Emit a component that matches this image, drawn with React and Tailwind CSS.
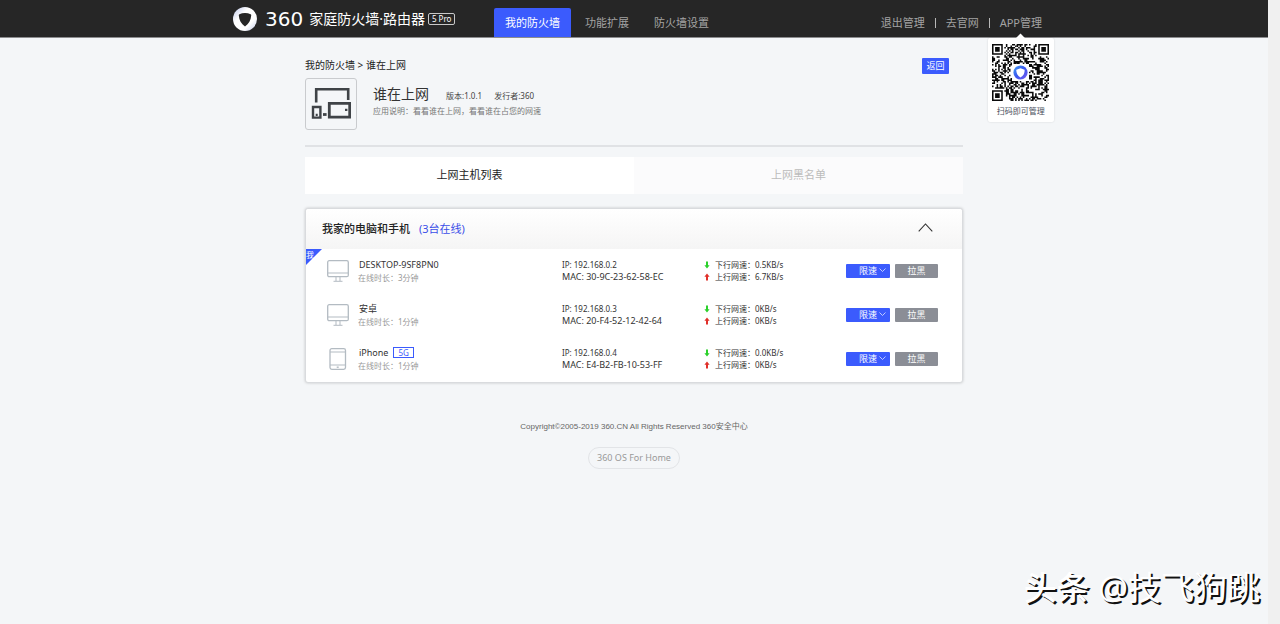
import { useState } from 'react'

const NAV = ['我的防火墙', '功能扩展', '防火墙设置']
const TABS = ['上网主机列表', '上网黑名单']

const DEVICES = [
  { id: 1, type: 'desktop', name: 'DESKTOP-9SF8PN0', online: '3分钟', ip: '192.168.0.2', mac: '30-9C-23-62-58-EC', down: '0.5KB/s', up: '6.7KB/s', self: true },
  { id: 2, type: 'desktop', name: '安卓', online: '1分钟', ip: '192.168.0.3', mac: '20-F4-52-12-42-64', down: '0KB/s', up: '0KB/s' },
  { id: 3, type: 'phone', name: 'iPhone', band: '5G', online: '1分钟', ip: '192.168.0.4', mac: 'E4-B2-FB-10-53-FF', down: '0.0KB/s', up: '0KB/s' },
]

const QR_SIZE = 37

// finder squares sit in three corners, the rest is filled from a small hash
function isDark(x, y) {
  const corners = [[0, 0], [QR_SIZE - 7, 0], [0, QR_SIZE - 7]]
  for (const [cx, cy] of corners) {
    const dx = x - cx
    const dy = y - cy
    if (dx >= -1 && dx <= 7 && dy >= -1 && dy <= 7) {
      const ring = Math.max(Math.abs(dx - 3), Math.abs(dy - 3))
      return ring === 3 || ring <= 1
    }
  }
  if (x > 12 && x < 24 && y > 12 && y < 24) return false
  let h = (x * 374761393 + y * 668265263) | 0
  h = Math.imul(h ^ (h >>> 13), 1274126177)
  return ((h ^ (h >>> 16)) & 255) < 134
}

function QrCode() {
  const cells = []
  for (let y = 0; y < QR_SIZE; y++) {
    for (let x = 0; x < QR_SIZE; x++) {
      if (isDark(x, y)) cells.push(`M${x} ${y}h1v1h-1z`)
    }
  }
  return (
    <svg viewBox="0 0 37 37" className="w-[57px] h-[57px]" role="img" aria-label="APP管理">
      <defs>
        <linearGradient id="qr-logo" x1="0" y1="0" x2="1" y2="1">
          <stop offset="0" stopColor="#3fa2f5" />
          <stop offset="0.5" stopColor="#3a55ee" />
          <stop offset="1" stopColor="#7a5cf0" />
        </linearGradient>
      </defs>
      <path d={cells.join('')} fill="#0a0a0a" />
      <circle cx="18.5" cy="18.5" r="4.6" fill="url(#qr-logo)" />
      <path d="M18.5 15.8l2.7 .9c.1 2.2-.7 3.8-2.7 5-2-1.2-2.8-2.8-2.7-5z" fill="#fff" />
    </svg>
  )
}

function ShieldLogo() {
  return (
    <svg viewBox="0 0 24 24" className="w-6 h-6" aria-hidden="true">
      <defs>
        <linearGradient id="shield" x1="0" y1="0" x2="1" y2="1">
          <stop offset="0" stopColor="#b9c4ea" />
          <stop offset="0.35" stopColor="#ffffff" />
          <stop offset="0.7" stopColor="#ffffff" />
          <stop offset="1" stopColor="#bcc5e6" />
        </linearGradient>
      </defs>
      <circle cx="12" cy="12" r="12" fill="url(#shield)" />
      <path d="M12 6c2 .1 4 .5 5.600 1.200.6.300.7.600.6 1.200-.3 4.600-2.300 8.200-6.200 11-3.900-2.800-5.900-6.400-6.200-11 0-.6.100-.9.600-1.200C8 6.500 10 6.100 12 6z" fill="#262626" />
    </svg>
  )
}

function DevicesIcon() {
  return (
    <svg viewBox="0 0 40 34" className="w-10 h-[34px]" fill="none" stroke="#3f4347" aria-hidden="true">
      <path d="M5.200 15.500V2.300h32V13" strokeWidth="2.600" />
      <path d="M18.300 16.300h20.400v13.900H18.300z" strokeWidth="2.800" />
      <path d="M2 20h7.400v10.600H2z" strokeWidth="2.400" />
      <path d="M12 27.500h3.600" strokeWidth="2.800" />
      <path d="M34 22.800h2.400M4.700 27.800h2" strokeWidth="2.200" />
    </svg>
  )
}

function DeviceIcon({ type }) {
  if (type === 'phone') {
    return (
      <svg viewBox="0 0 22 22" className="w-[22px] h-[22px]" fill="none" stroke="#b3bbc2" aria-hidden="true">
        <rect x="3" y="0.700" width="15.500" height="20.600" rx="1.800" strokeWidth="1.300" />
        <path d="M3 4h15.500M3 17h15.500" />
        <path d="M9.700 19.200h2" strokeWidth="1.400" />
      </svg>
    )
  }
  return (
    <svg viewBox="0 0 22 22" className="w-[22px] h-[22px]" fill="none" stroke="#b3bbc2" aria-hidden="true">
      <rect x="0.700" y="0.700" width="20.600" height="16" rx="1.500" strokeWidth="1.300" />
      <path d="M1 13h20M9 17v4M13 17v4M6.500 21.300h9" />
    </svg>
  )
}

function SpeedArrow({ up }) {
  return (
    <svg viewBox="0 0 6 8" className="w-[6px] h-2" aria-hidden="true">
      {up ? (
        <path d="M3 .5L5.600 3.800H4v3.700H2V3.800H.4z" fill="#e0302a" />
      ) : (
        <path d="M3 7.500L.4 4.200H2V.5h2v3.700h1.600z" fill="#2bd02b" />
      )}
    </svg>
  )
}

function Header({ nav, onNav }) {
  return (
    <header className="bg-[#262626] border-b border-[#8c8c8e]">
      <div className="mx-auto max-w-[822px] h-[37px] pl-[10px] pr-[3px] flex items-center">
        <a href="#home" className="w-[261px] flex items-center text-white">
          <ShieldLogo />
          <span className="ml-2 font-['DejaVu_Sans',sans-serif] text-[20px] leading-6">360</span>
          <span className="ml-[6px] text-[14px] leading-6 whitespace-nowrap">家庭防火墙·路由器</span>
          <span className="ml-[3px] px-[3px] border border-[#c8c8c8] rounded-[2px] text-[8px] leading-[10px] whitespace-nowrap">5 Pro</span>
        </a>
        <nav className="flex self-end gap-[3px]">
          {NAV.map((item) => (
            <a
              key={item}
              href="#nav"
              onClick={() => onNav(item)}
              className={`h-[29px] px-[11px] rounded-t-[2px] text-[11px] leading-[29px] ${
                nav === item ? 'bg-[#3b5bfd] text-white' : 'text-[#a3a3a3]'
              }`}
            >
              {item}
            </a>
          ))}
        </nav>
        <div className="ml-auto mt-2 flex items-center gap-[10px] text-[11px] leading-[29px] text-[#a3a3a3]">
          <a href="#logout">退出管理</a>
          <span className="w-px h-[10px] bg-[#b8b8b8]" />
          <a href="#site">去官网</a>
          <span className="w-px h-[10px] bg-[#b8b8b8]" />
          <div className="relative">
            <a href="#app">APP管理</a>
            <div className="absolute top-[30px] left-1/2 -translate-x-1/2 w-[66px] h-[84px] pt-[6px] flex flex-col items-center bg-white rounded-[2px] shadow-[0_0_2px_rgba(0,0,0,0.15)]">
              <span className="absolute -top-[3px] w-[7px] h-[7px] rotate-45 bg-white" />
              <QrCode />
              <span className="text-[8px] leading-5 text-[#4a4f5c] whitespace-nowrap">扫码即可管理</span>
            </div>
          </div>
        </div>
      </div>
    </header>
  )
}

function DeviceRow({ device }) {
  return (
    <tr className="h-11">
      <td className="relative p-0 pl-[21px]">
        {device.self && (
          <span className="absolute top-0 left-0 w-4 h-4 bg-[#3b5bfd] text-white text-[8px] leading-3 [clip-path:polygon(0_0,100%_0,0_100%)]">
            我
          </span>
        )}
        <div className="flex items-center gap-[9px]">
          <DeviceIcon type={device.type} />
          <div>
            <div className="flex items-center gap-[5px] pl-px text-[9px] leading-[13px] text-[#333]">
              {device.name}
              {device.band && (
                <span className="px-1 border border-[#3b5bfd] text-[8px] leading-[9px] text-[#3b5bfd]">{device.band}</span>
              )}
            </div>
            <div className="text-[8px] leading-[13px] text-[#999]">在线时长：{device.online}</div>
          </div>
        </div>
      </td>
      <td className="p-0">
        <div>IP: {device.ip}</div>
        <div className="text-[9px] leading-3">MAC: {device.mac}</div>
      </td>
      <td className="p-0">
        <div className="flex items-center gap-[5px]">
          <SpeedArrow />
          下行网速：{device.down}
        </div>
        <div className="flex items-center gap-[5px]">
          <SpeedArrow up />
          上行网速：{device.up}
        </div>
      </td>
      <td className="p-0">
        <div className="flex items-center gap-[5px] text-white">
          <div className="relative w-11">
            <select
              aria-label={`${device.name} 限速`}
              className="block appearance-none w-full h-[14px] pl-[13px] rounded-[1px] bg-[#3b5bfd] text-[9px] leading-[14px]"
            >
              <option>限速</option>
            </select>
            <svg viewBox="0 0 7 4" className="absolute right-1 top-1 w-[7px] h-1 pointer-events-none" fill="none" stroke="#dfe4ff" strokeWidth="0.800" aria-hidden="true">
              <path d="M.5 .5l3 3 3-3" />
            </svg>
          </div>
          <button type="button" className="w-[43px] h-[14px] rounded-[1px] bg-[#8b8e96] text-[9px] leading-[14px]">
            拉黑
          </button>
        </div>
      </td>
    </tr>
  )
}

export default function App() {
  const [nav, setNav] = useState(NAV[0])
  const [tab, setTab] = useState(TABS[0])
  const [open, setOpen] = useState(true)

  return (
    <div className="relative flex min-h-screen bg-[#f4f6f8] font-['Noto_Sans','Noto_Sans_CJK_SC',sans-serif]">
      <div className="flex-1">
        <Header nav={nav} onNav={setNav} />

        <main className="mx-auto max-w-[658px] pt-5">
          <div className="flex items-start justify-between">
            <div className="text-[10px] leading-[14px] text-[#222]">
              <a href="#firewall">我的防火墙</a> &gt; <span>谁在上网</span>
            </div>
            <button type="button" className="mr-[14px] w-[27px] h-4 rounded-[1px] bg-[#3b5bfd] text-[9px] leading-4 text-white">
              返回
            </button>
          </div>

          <div className="mt-1 flex gap-4">
            <div className="flex items-center justify-center w-[52px] h-[52px] border border-[#c9cbce] rounded-[3px]">
              <DevicesIcon />
            </div>
            <div className="pt-[5px]">
              <div className="flex items-baseline text-[8px] text-[#444]">
                <h1 className="mr-[17px] text-[14px] leading-[22px] text-[#333]">谁在上网</h1>
                <span className="mr-3">版本:1.0.1</span>
                <span>发行者:360</span>
              </div>
              <p className="text-[8px] leading-3 text-[#777]">应用说明：看看谁在上网，看看谁在占您的网速</p>
            </div>
          </div>

          <div className="mt-[15px] border-t-2 border-[#e0e2e5]" />

          <div className="mt-[10px] flex">
            {TABS.map((t) => (
              <button
                key={t}
                type="button"
                onClick={() => setTab(t)}
                className={`flex-1 h-[37px] text-[11px] ${
                  tab === t ? 'bg-white text-[#222]' : 'bg-[#fbfbfc] text-[#bbb]'
                }`}
              >
                {t}
              </button>
            ))}
          </div>

          <section className="mt-[14px] pb-px bg-white border border-[#d9dbde] rounded-[3px] shadow-[0_0_3px_rgba(0,0,0,0.2)]">
            <div className="flex items-center h-10 pl-4 pr-[29px] rounded-t-[3px] bg-linear-to-b from-white to-[#f5f5f5] text-[11px]">
              <h2 className="font-medium text-[#222]">我家的电脑和手机</h2>
              <span className="ml-[9px] text-[#3b4fe8]">(3台在线)</span>
              <button type="button" aria-label="折叠" onClick={() => setOpen(!open)} className="ml-auto pb-1">
                <svg viewBox="0 0 15 9" className="block w-[15px] h-[9px]" fill="none" stroke="#333" strokeWidth="1.100" aria-hidden="true">
                  <path d="M.7 8.300L7.500 1l6.800 7.300" />
                </svg>
              </button>
            </div>
            {open && (
              <table className="w-full table-fixed text-[8px] leading-3 text-[#333]">
                <colgroup>
                  <col />
                  <col className="w-[142px]" />
                  <col className="w-[142px]" />
                  <col className="w-[116px]" />
                </colgroup>
                <tbody>
                  {DEVICES.map((d) => (
                    <DeviceRow key={d.id} device={d} />
                  ))}
                </tbody>
              </table>
            )}
          </section>

          <footer className="pt-9 flex flex-col items-center">
            <p className="font-['Liberation_Sans','Noto_Sans_CJK_SC',sans-serif] text-[8px] leading-4 text-[#666]">
              Copyright©2005-2019 360.CN All Rights Reserved 360安全中心
            </p>
            <a href="#os" className="mt-3 px-2 h-[22px] border border-[#e2e4e7] rounded-full text-[9px] leading-5 text-[#999]">
              360 OS For Home
            </a>
          </footer>
        </main>
      </div>

      <div className="w-3 bg-[#f0f0f0]" />

      <p className="absolute right-[20px] bottom-3 text-[33px] leading-[48px] text-white [text-shadow:2px_2px_0_#111]">
        <span className="font-medium">头条</span> @技飞狗跳
      </p>
    </div>
  )
}
